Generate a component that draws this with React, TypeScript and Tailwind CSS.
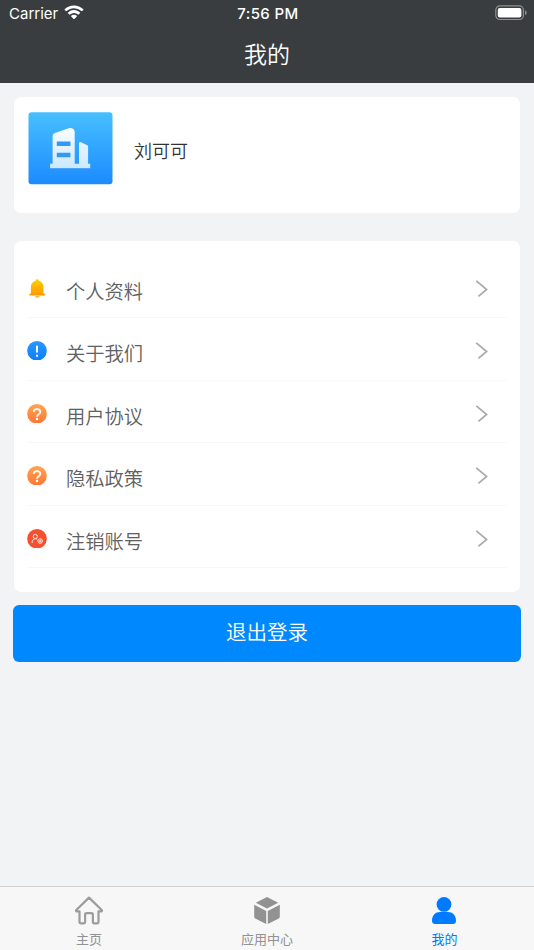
import type { ReactNode } from 'react'

const FONT = "font-['Inter','Noto_Sans_CJK_SC',sans-serif]"

function WifiIcon() {
  return (
    <svg width="20" height="15" viewBox="0 0 20 15" fill="#fff">
      <path d="M10 .5c3.600 0 6.900 1.400 9.300 3.700.2.200.2.500 0 .7l-1.200 1.200c-.2.200-.5.200-.7 0A10.700 10.700 0 0 0 10 3.200c-2.900 0-5.500 1.100-7.400 2.900-.2.200-.5.200-.7 0L.7 4.900c-.2-.2-.2-.5 0-.7A13.400 13.400 0 0 1 10 .5z" />
      <path d="M10 5.100c2.300 0 4.400.9 6 2.400.2.200.2.500 0 .7l-1.300 1.300c-.2.200-.5.200-.7 0a6 6 0 0 0-8 0c-.2.200-.5.200-.7 0L4 8.200c-.2-.2-.2-.5 0-.7a8.700 8.700 0 0 1 6-2.400z" />
      <path d="M10 9.800c1.100 0 2.100.4 2.800 1 .2.200.2.500 0 .7l-2.400 2.400c-.2.200-.6.200-.8 0l-2.400-2.400c-.2-.2-.2-.5 0-.7.700-.6 1.700-1 2.800-1z" />
    </svg>
  )
}

function BatteryIcon() {
  return (
    <svg width="32" height="16" viewBox="0 0 32 16">
      <rect x=".8" y=".9" width="27.600" height="13.600" rx="4" fill="none" stroke="#8e9192" strokeWidth="1.200" />
      <rect x="2.800" y="2.900" width="23.600" height="9.600" rx="2" fill="#fff" />
      <path d="M30 5.200c1 .4 1.700 1.400 1.700 2.500s-.7 2.100-1.700 2.500z" fill="#8e9192" />
    </svg>
  )
}

function CompanyLogo() {
  return (
    <svg width="85" height="73" viewBox="0 0 85 73">
      <defs>
        <linearGradient id="logoBg" x1="0" y1="0" x2="0" y2="1">
          <stop offset="0" stopColor="#48bffe" />
          <stop offset="1" stopColor="#1b8bff" />
        </linearGradient>
        <linearGradient id="logoFg" x1="0" y1="0" x2="0" y2="1">
          <stop offset="0" stopColor="#fafdff" />
          <stop offset="1" stopColor="#cbe9ff" />
        </linearGradient>
      </defs>
      <g transform="translate(.5 .2)">
        <rect width="84" height="72" rx="3" fill="url(#logoBg)" />
        <path d="M22 53.300h39.500v3.500H22z" fill="#2385e8" opacity=".45" />
        <path
          d="M21.600 51.500h2.500V24.200c0-1.600.9-2.700 2.300-3.300l13.800-4.900c3.200-1.100 6 .9 6 4v31.500h4.300V31.200c0-1.100.9-1.600 1.800-1.200l6 2.700c.9.400 1.300 1 1.300 1.900v16.900h2.100v4.500H21.600z"
          fill="url(#logoFg)"
        />
        <path d="M28.300 29.300h13.600v4.500H28.300zM28.300 40.500h13.600v4.500H28.300z" fill="#3199f6" />
      </g>
    </svg>
  )
}

function BellIcon() {
  return (
    <svg width="20" height="19" viewBox="0 0 20 19">
      <defs>
        <linearGradient id="bell" x1="0" y1="0" x2="0" y2="1">
          <stop offset="0" stopColor="#ffcf00" />
          <stop offset="1" stopColor="#ff9800" />
        </linearGradient>
      </defs>
      <path
        d="M10.200.3c.9 0 1.500.6 1.500 1.500 2.900.8 4.800 3 4.800 6v5.800c0 .9.400 1.400 1.300 1.700.6.200.6 1.300-.1 1.300H2.700c-.7 0-.7-1.100-.1-1.300.9-.3 1.300-.8 1.300-1.700V7.800c0-3 1.900-5.200 4.800-6 0-.9.600-1.500 1.500-1.500z"
        fill="url(#bell)"
      />
      <path d="M7.700 17.200h5c-.3.900-1.200 1.300-2.500 1.300s-2.200-.4-2.500-1.300z" fill="#ff9c08" />
    </svg>
  )
}

// The round icons are cut flat a little above their bottom edge.
function InfoIcon() {
  return (
    <svg width="20" height="19" viewBox="0 0 20 19">
      <defs>
        <linearGradient id="info" x1="0" y1="0" x2="0" y2="1">
          <stop offset="0" stopColor="#2b97ff" />
          <stop offset="1" stopColor="#0b80fb" />
        </linearGradient>
      </defs>
      <circle cx="10" cy="9.800" r="9.800" fill="url(#info)" />
      <path d="M9 4.800h2v6.800H9zM9 13.700h2v2H9z" fill="#fff" />
    </svg>
  )
}

function QuestionIcon({ id }: { id: string }) {
  return (
    <svg width="20" height="19" viewBox="0 0 20 19">
      <defs>
        <linearGradient id={id} x1="0" y1="0" x2="0" y2="1">
          <stop offset="0" stopColor="#ffa553" />
          <stop offset="1" stopColor="#ff7534" />
        </linearGradient>
      </defs>
      <circle cx="10" cy="9.800" r="9.800" fill={`url(#${id})`} />
      <path d="M6.700 8.100c0-1.900 1.300-3 3.300-3s3.300 1.100 3.300 2.800c0 2.300-3.300 2.300-3.300 4.800" fill="none" stroke="#fff" strokeWidth="1.800" />
      <circle cx="10" cy="15" r="1.200" fill="#fff" />
    </svg>
  )
}

function AccountIcon() {
  return (
    <svg width="20" height="19" viewBox="0 0 20 19">
      <circle cx="10" cy="9.800" r="9.800" fill="#f5502f" />
      <g fill="none" stroke="#fff" strokeWidth="1" opacity=".85">
        <circle cx="8.300" cy="7.500" r="2.100" />
        <path d="M5.100 13.900c.1-2.400 1.100-4 3.200-4.300 1 .1 1.500.4 2 .9" />
        <circle cx="13.100" cy="12" r="2.300" />
        <path d="M11.700 12h2.800M13.100 10.600v2.800" />
      </g>
    </svg>
  )
}

function Chevron() {
  return (
    <svg width="14" height="18" viewBox="0 0 14 18">
      <path d="M1.300.8l10.300 8.700-8.200 6.800" fill="none" stroke="#aaa" strokeWidth="1.700" />
    </svg>
  )
}

function HomeIcon() {
  return (
    <svg width="28" height="29" viewBox="0 0 28 29" fill="none" stroke="#9c9c9c" strokeWidth="2.200" strokeLinejoin="round">
      <path d="M14 1.600L1.300 14c-.5.700-.2 1.300.6 1.300h2.600v10.500c0 1 .6 1.600 1.600 1.600h2.500c1 0 1.500-.6 1.500-1.600v-7.200c0-.9.500-1.400 1.400-1.400h5c.9 0 1.400.5 1.400 1.400v7.200c0 1 .5 1.600 1.500 1.600h2.500c1 0 1.600-.6 1.600-1.600V15.300h2.600c.8 0 1.100-.6.600-1.300z" />
    </svg>
  )
}

function CubeIcon() {
  return (
    <svg width="28" height="29" viewBox="0 0 28 29" fill="#929292">
      <path d="M14 1l11.200 5.700L14 12.500 2.800 6.700z" />
      <path d="M1.200 8.800L13.200 15v13L2.200 22.400c-.6-.3-1-.9-1-1.600z" />
      <path d="M26.800 8.800L14.800 15v13l11-5.600c.6-.3 1-.9 1-1.600z" />
    </svg>
  )
}

function UserIcon() {
  return (
    <svg width="28" height="29" viewBox="0 0 28 29" fill="#007aff" className="-ml-px">
      <circle cx="14" cy="8.400" r="7.400" />
      <path d="M2 24.400c0-5 3.600-8.300 8-8.300h8c4.400 0 8 3.300 8 8.300 0 2.300-1 3.600-3.200 3.600H5.200C3 28 2 26.700 2 24.400z" />
    </svg>
  )
}

const menuItems: { label: string; icon: ReactNode }[] = [
  { label: '个人资料', icon: <BellIcon /> },
  { label: '关于我们', icon: <InfoIcon /> },
  { label: '用户协议', icon: <QuestionIcon id="agreement" /> },
  { label: '隐私政策', icon: <QuestionIcon id="privacy" /> },
  { label: '注销账号', icon: <AccountIcon /> },
]

const tabs = [
  { label: '主页', icon: <HomeIcon />, active: false },
  { label: '应用中心', icon: <CubeIcon />, active: false },
  { label: '我的', icon: <UserIcon />, active: true },
]

export default function App() {
  return (
    <div className={`w-[534px] h-[950px] flex flex-col bg-[#f2f3f5] overflow-hidden ${FONT}`}>
      <header className="h-[83px] shrink-0 bg-[#393d3f] text-white">
        <div className="h-7 grid grid-cols-3 items-center pl-[9px] pr-[7px]">
          <div className="flex items-center gap-1.5">
            <span className="text-[15px] leading-7">Carrier</span>
            <div className="-mt-[3px]"><WifiIcon /></div>
          </div>
          <span className="text-center text-[15px] leading-7 font-medium tracking-[0.4px]">7:56 PM</span>
          <div className="flex justify-end -mt-0.5"><BatteryIcon /></div>
        </div>
        <h1 className="text-center text-[23px] leading-[54px] font-[350]">我的</h1>
      </header>

      <main className="flex-1 px-[14px] pt-[14px]">
        <section className="h-[116px] w-[506px] rounded-[7px] bg-white flex items-start pl-[14px] pt-[15px]">
          <CompanyLogo />
          <span className="ml-[21px] mt-1 h-[72px] leading-[72px] text-[18px] font-[350] text-[#333]">刘可可</span>
        </section>

        <section className="mt-7 h-[351px] w-[506px] rounded-[7px] bg-white pt-[14.500px] px-[13px]">
          {menuItems.map(item => (
            <div key={item.label} className="h-[62.500px] border-b border-[#f8f8f8] flex items-start pt-[23px] pr-[18px]">
              {item.icon}
              <span className="ml-[19px] text-[19.300px] leading-[26px] font-[350] text-[#606060]">{item.label}</span>
              <div className="ml-auto mt-px"><Chevron /></div>
            </div>
          ))}
        </section>

        <button className="block mt-[13px] -mx-px w-[508px] h-[56.500px] pt-px rounded-[6px] bg-[#0089ff] text-white text-[20.500px] font-[350]">退出登录</button>
      </main>

      <nav className="h-16 shrink-0 grid grid-cols-3 bg-[#f7f7f7] border-t border-[#cfcfd1]">
        {tabs.map(tab => (
          <div key={tab.label} className={`flex flex-col items-center pt-[9px] ${tab.active ? 'text-[#007aff] pr-px' : 'text-[#929292]'}`}>
            {tab.icon}
            <span className="mt-[5px] text-[13px] leading-[18px]">{tab.label}</span>
          </div>
        ))}
      </nav>
    </div>
  )
}
